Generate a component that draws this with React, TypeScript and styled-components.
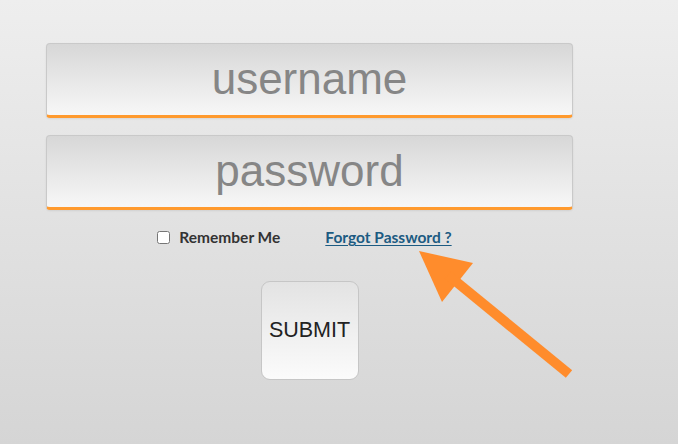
import styled, { createGlobalStyle } from "styled-components";

const GlobalStyle = createGlobalStyle`
  html, body {
    margin: 0;
    padding: 0;
  }
  body {
    font-family: "Liberation Sans", Arial, sans-serif;
  }
`;

const Page = styled.div`
  position: relative;
  box-sizing: border-box;
  width: 678px;
  height: 444px;
  padding: 43px 0 0 46px;
  background: linear-gradient(to bottom, #eeeeee, #d5d5d5);
  overflow: hidden;
`;

const Form = styled.form`
  width: 527px;
  display: flex;
  flex-direction: column;
  align-items: center;
`;

const Field = styled.input`
  box-sizing: border-box;
  width: 100%;
  height: 75px;
  margin: 0 0 17px;
  padding: 0 0 2px;
  border: 1px solid #c9c9c9;
  border-bottom: 3px solid #ff9a2e;
  border-radius: 4px;
  background: linear-gradient(to bottom, #d7d7d7, #f7f7f7);
  box-shadow: 0 1px 2px rgba(0, 0, 0, 0.08);
  font-family: "Liberation Sans", Arial, sans-serif;
  font-size: 44px;
  text-align: center;
  color: #555;
  outline: none;

  &::placeholder {
    color: #868686;
  }
`;

const OptionsRow = styled.div`
  display: flex;
  align-items: center;
  gap: 45px;
  margin: -1px 0 0 -10px;
  height: 22px;
  font-family: Lato, "Open Sans", sans-serif;
  font-weight: 700;
  font-size: 15.5px;
`;

const Remember = styled.label`
  display: flex;
  align-items: center;
  gap: 9px;
  color: #333333;
`;

const Check = styled.input`
  width: 13px;
  height: 13px;
  margin: 0;
`;

const ForgotLink = styled.a`
  color: #1c5b82;
  text-decoration: underline;
  text-underline-offset: 2px;
  cursor: pointer;
`;

const SubmitButton = styled.button`
  box-sizing: border-box;
  width: 98px;
  height: 99px;
  margin-top: 33px;
  border: 1px solid #c6c6c6;
  border-radius: 9px;
  background: linear-gradient(to bottom, #e3e3e3, #fbfbfb);
  font-family: "Liberation Sans", Arial, sans-serif;
  font-size: 21.5px;
  color: #222222;
  cursor: pointer;
`;

const Arrow = styled.svg`
  position: absolute;
  left: 400px;
  top: 240px;
  width: 190px;
  height: 150px;
  pointer-events: none;
`;

export default function App() {
  return (
    <>
      <GlobalStyle />
      <Page>
        <Form onSubmit={(e) => e.preventDefault()}>
          <Field type="text" placeholder="username" />
          <Field type="password" placeholder="password" />
          <OptionsRow>
            <Remember>
              <Check type="checkbox" />
              Remember Me
            </Remember>
            <ForgotLink>Forgot Password ?</ForgotLink>
          </OptionsRow>
          <SubmitButton type="submit">SUBMIT</SubmitButton>
        </Form>
        {/* callout arrow pointing at the link */}
        <Arrow viewBox="400 240 190 150">
          <polygon points="419,251 473,263 442,302" fill="#ff8c2c" />
          <line
            x1="448"
            y1="275"
            x2="569"
            y2="374"
            stroke="#ff8c2c"
            strokeWidth="10"
          />
        </Arrow>
      </Page>
    </>
  );
}
